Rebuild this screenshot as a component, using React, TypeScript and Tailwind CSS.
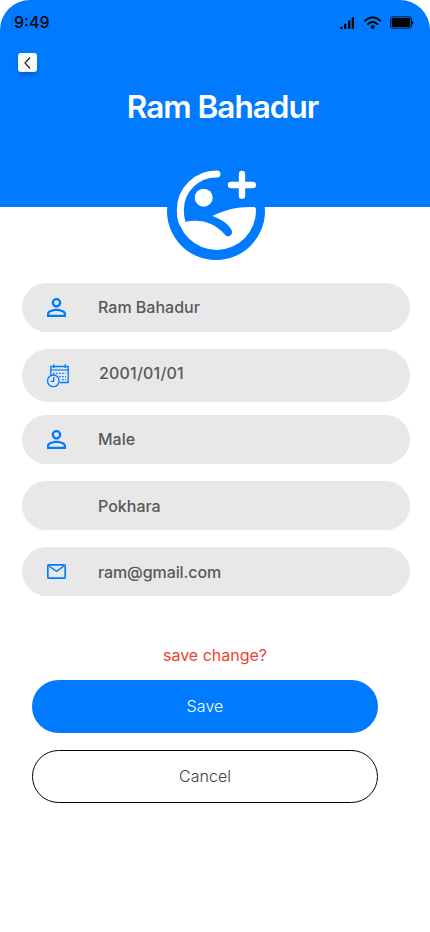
import type { ReactNode } from "react";

const BLUE = "#007bff";

function StatusIcons() {
  return (
    <svg width="74" height="14" viewBox="0 0 222 42" fill="none">
      <g fill="#050505">
        <rect x="1" y="32" width="7" height="7" rx="2" />
        <rect x="12" y="23" width="7" height="16" rx="2" />
        <rect x="24" y="13" width="7" height="26" rx="2" />
        <rect x="35" y="4" width="7" height="35" rx="2" />
        <circle cx="98" cy="33" r="6" />
        <rect x="155" y="6" width="56" height="27" rx="3" />
        <path d="M216 14q4 1 4 6t-4 6z" />
      </g>
      <path d="M75 14q23-20 46 0M84 24q14-12 28 0" stroke="#050505" strokeWidth="6" strokeLinecap="round" />
      <rect x="151.500" y="2.500" width="63" height="34" rx="6" stroke="#050505" strokeWidth="2.500" />
    </svg>
  );
}

function PersonIcon() {
  return (
    <svg width="19" height="19" viewBox="4 4 16 16" fill={BLUE}>
      <path d="M12 5.900a2.100 2.100 0 1 1 0 4.200a2.100 2.100 0 0 1 0-4.200m0 9c2.970 0 6.100 1.460 6.100 2.100v1.100H5.900V17c0-.64 3.130-2.100 6.100-2.100M12 4C9.790 4 8 5.790 8 8s1.790 4 4 4 4-1.790 4-4-1.790-4-4-4zm0 9c-2.670 0-8 1.340-8 4v3h16v-3c0-2.660-5.330-4-8-4z" />
    </svg>
  );
}

function CalendarIcon() {
  return (
    <svg width="22" height="24" viewBox="36 41 66 72" fill="none" stroke={BLUE}>
      <path d="M47.500 74V48.500H99.500V96.500H75" strokeWidth="4" />
      <path d="M47 59H100" strokeWidth="3.500" />
      <path d="M56.500 42V53M90.500 42V53" strokeWidth="4" />
      <path d="M54 69H92" strokeWidth="4" strokeDasharray="5 4" />
      <path d="M72 79H93M81 88H93" strokeWidth="4" strokeDasharray="5 4" />
      <circle cx="55" cy="91.500" r="17.500" strokeWidth="4" />
      <path d="M56 80V93H47" strokeWidth="4" />
    </svg>
  );
}

function MailIcon() {
  return (
    <svg width="19" height="15" viewBox="0 0 57 45" fill="none" stroke={BLUE}>
      <rect x="2.500" y="2.500" width="52" height="40" rx="3" strokeWidth="5" />
      <path d="M6 6L28.500 22L51 6" strokeWidth="4.500" />
    </svg>
  );
}

function AvatarIcon() {
  return (
    <svg width="98" height="98" viewBox="21 6 294 294" fill="none">
      <path d="M171 42A108 108 0 0 0 61 150Q61 172 66 187" stroke="white" strokeWidth="21" strokeLinecap="round" />
      <circle cx="131" cy="113" r="27" fill="white" />
      <path d="M246 42V107M213 75H279" stroke="white" strokeWidth="19" strokeLinecap="round" />
      <path
        d="M51 152L73 186C124 176 162 188 195 224C205 235 221 224 215 211C204 190 184 178 157 168C194 149 236 139 284 141Q288 142 288 150A118.500 119 0 0 1 51 152Z"
        fill="white"
      />
    </svg>
  );
}

function Field({ icon, children, className = "h-[48.500px]" }: { icon?: ReactNode; children: ReactNode; className?: string }) {
  return (
    <div className={`flex shrink-0 items-center rounded-full bg-[#e8e8e8] pl-[25px] text-base leading-6 font-medium text-[#585858] ${className}`}>
      <span className="flex w-[51px] shrink-0">{icon}</span>
      {children}
    </div>
  );
}

export default function App() {
  return (
    <main className="h-[932px] w-[430px] overflow-hidden bg-white font-['Inter',sans-serif]">
      <header className="flex h-[207px] flex-col rounded-t-[30px] bg-[#007bff]">
        <div className="flex h-[45px] shrink-0 items-center justify-between pr-4 pl-[14px]">
          <span className="pb-0.5 text-base font-medium text-[#050505]">9:49</span>
          <StatusIcons />
        </div>
        <button aria-label="Back" className="mt-2 ml-[18px] flex size-[19px] shrink-0 items-center justify-center rounded-[3px] bg-[#fafafa] shadow-[0_3px_4px_rgba(0,0,0,0.2)]">
          <svg width="7" height="12" viewBox="0 0 7 12" fill="none" stroke="#222" strokeWidth="1.200">
            <path d="M6 .5L1 6L6 11.500" />
          </svg>
        </button>
        <h1 className="mt-[15px] ml-[15px] text-center text-[31.500px] leading-10 font-semibold tracking-[-1px] text-white">Ram Bahadur</h1>
        <div className="mt-[35px] ml-[167px] size-[98px] shrink-0 rounded-full bg-[#007bff]">
          <AvatarIcon />
        </div>
      </header>

      <section className="mr-5 ml-[22px] flex flex-col pt-[76px]">
        <Field icon={<PersonIcon />}>Ram Bahadur</Field>
        <Field icon={<CalendarIcon />} className="mt-[17.500px] h-[53px]">
          <span className="pb-1.5 pl-px tracking-[0.2px]">2001/01/01</span>
        </Field>
        <Field icon={<PersonIcon />} className="mt-[13px] h-[48.500px]">Male</Field>
        <Field className="mt-[17.500px] h-[48.500px]"><span className="pt-0.5">Pokhara</span></Field>
        <Field icon={<MailIcon />} className="mt-[17.500px] h-[48.500px]"><span className="pt-0.5 tracking-[-0.1px]">ram@gmail.com</span></Field>
      </section>

      <section className="mt-[47.500px] flex flex-col">
        <p className="h-[37px] text-center text-base leading-6 text-[#eb4335]">save change?</p>
        <div className="ml-8 flex w-[346px] flex-col gap-[17px]">
          <button className="h-[53px] rounded-full bg-[#007bff] pb-0.5 text-base font-light tracking-[0.1px] text-white">Save</button>
          <button className="h-[53px] rounded-full border border-black pb-0.5 text-base font-light text-[#404040]">Cancel</button>
        </div>
      </section>
    </main>
  );
}
